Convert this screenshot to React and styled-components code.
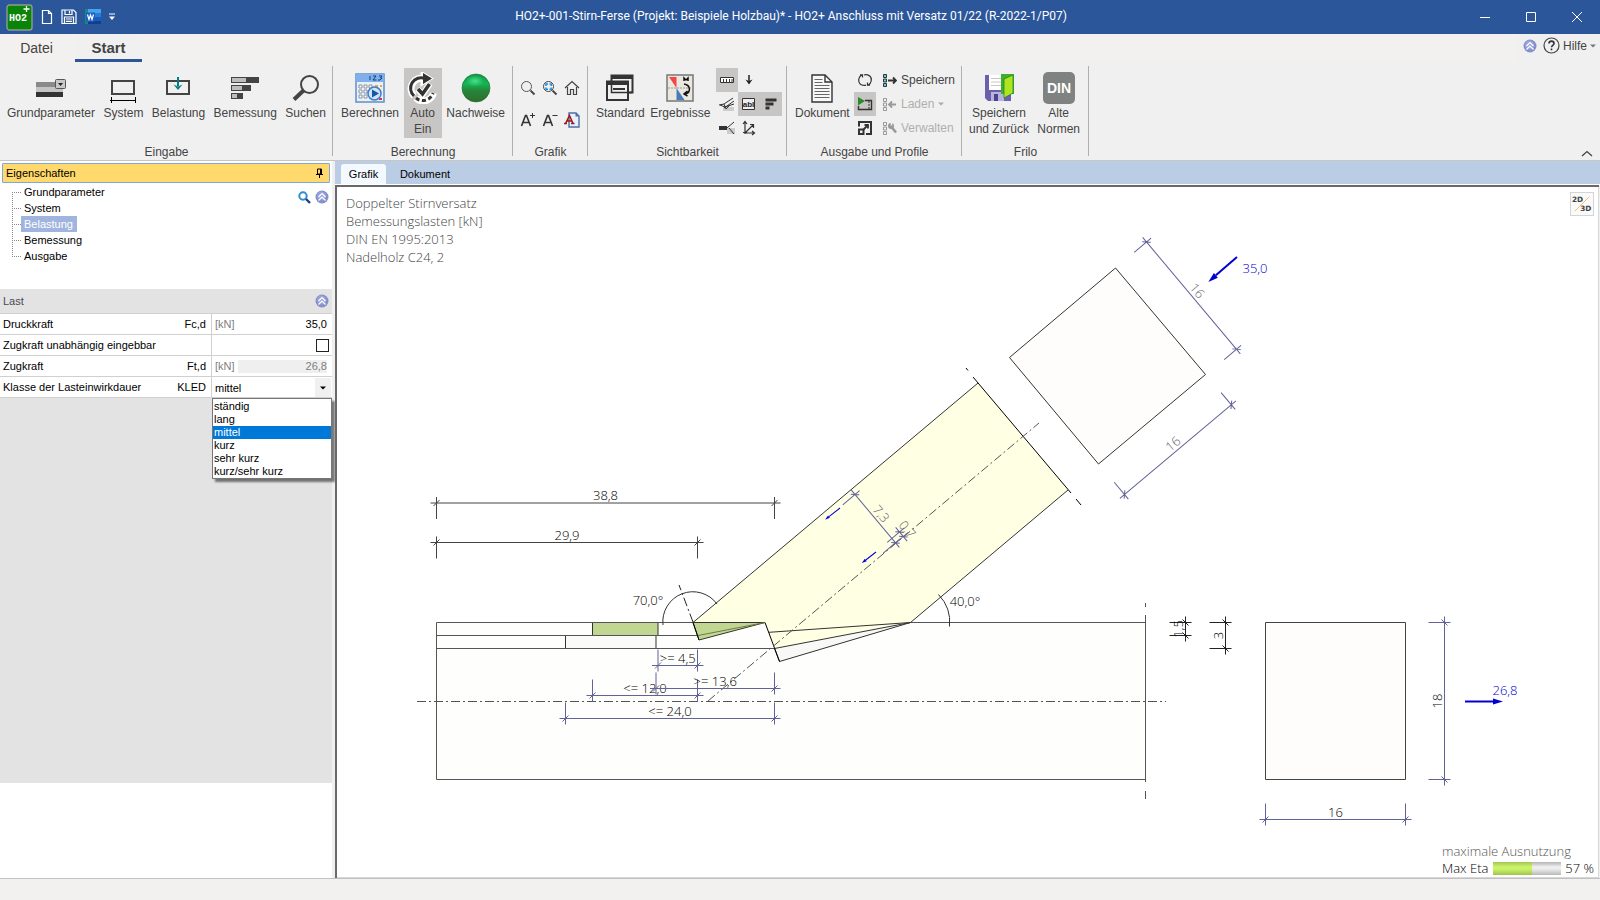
import React from "react";
import styled, { createGlobalStyle, css } from "styled-components";

const GlobalStyle = createGlobalStyle`
  * { box-sizing: border-box; }
  body { margin: 0; font-family: "Liberation Sans", Arial, sans-serif; font-size: 12px; color: #444; background: #fff; }
  button, input, select { font: inherit; color: inherit; margin: 0; }
`;

const drawingFont = `"Open Sans", "Noto Sans", sans-serif`;

/* ---------- window frame ---------- */

const Window = styled.div`
  display: flex;
  flex-direction: column;
  min-height: 100vh;
`;

const TitleBar = styled.header`
  display: flex;
  align-items: center;
  height: 34px;
  background: #2b579a;
  color: #fff;
`;

const QuickAccess = styled.div`
  display: flex;
  align-items: center;
  gap: 8px;
  width: 120px;
  padding-left: 6px;
`;

const Caption = styled.h1`
  flex: 1;
  margin: 0;
  padding-bottom: 2px;
  text-align: center;
  font: 400 12px/16px Roboto, "Open Sans", sans-serif;
  white-space: nowrap;
`;

const BareButton = styled.button`
  display: flex;
  align-items: center;
  justify-content: center;
  padding: 0;
  border: 0;
  background: none;
`;

const WindowButton = styled(BareButton)`
  width: 46px;
  height: 34px;
`;

/* ---------- ribbon ---------- */

const TabRow = styled.nav`
  display: flex;
  height: 28px;
  background: #f3f1ef;
`;

const RibbonTab = styled.button`
  width: ${(p) => (p.$active ? 67 : 75)}px;
  padding: 2px ${(p) => (p.$active ? 0 : 2)}px 0 0;
  border: 0;
  border-bottom: 3px solid ${(p) => (p.$active ? "#2b579a" : "transparent")};
  background: ${(p) => (p.$active ? "#f0f0f0" : "none")};
  font-size: ${(p) => (p.$active ? 15 : 14)}px;
  font-weight: ${(p) => (p.$active ? 700 : 400)};
`;

const HelpArea = styled.div`
  display: flex;
  align-items: center;
  gap: 6px;
  margin-left: auto;
  padding: 0 4px 5px 6px;
  background: #f0f0f0;
`;

const HelpButton = styled(BareButton)`
  gap: 3px;
`;

const Ribbon = styled.div`
  display: flex;
  height: 99px;
  padding-top: 4px;
  background: #f0f0f0;
  border-bottom: 1px solid #c8c6c4;
`;

const Group = styled.section`
  display: flex;
  flex-direction: column;
  flex: none;
  width: ${(p) => p.$width}px;
  height: 94px;
  background: linear-gradient(#b1afad, #b1afad) right top / 1px 90px no-repeat;
`;

const GroupBody = styled.div`
  display: flex;
  flex: 1;
  justify-content: space-between;
  align-items: flex-start;
  padding: 2px ${(p) => p.$right}px 0 ${(p) => p.$left}px;
`;

const GroupTitle = styled.h2`
  margin: 0;
  text-align: center;
  font-size: 12px;
  line-height: 16px;
  font-weight: 400;
`;

const LargeButton = styled.button`
  display: flex;
  flex-direction: column;
  align-items: center;
  gap: 1px;
  height: 70px;
  padding: 4px 0 0;
  border: 0;
  background: none;
  font-size: 12px;
  line-height: 16px;
  white-space: pre-line;
  ${(p) =>
    p.$pressed &&
    css`
      width: 38px;
      padding: 4px 3px 0;
      background: #c8c6c4;
    `}
`;

const IconGrid = styled.div`
  display: grid;
  grid-template-columns: repeat(${(p) => p.$cols ?? 3}, 22px);
  grid-auto-rows: ${(p) => p.$row}px;
  padding-top: ${(p) => p.$top ?? 0}px;
`;

const SmallButton = styled(BareButton)`
  background: ${(p) => (p.$pressed ? "#c8c6c4" : "none")};
`;

const Column = styled.div`
  display: flex;
  flex-direction: column;
`;

const ActionButton = styled.button`
  display: flex;
  align-items: center;
  gap: 4px;
  height: 24px;
  padding: 0 0 0 2px;
  border: 0;
  background: none;
  color: ${(p) => (p.disabled ? "#b1afad" : "#444")};
`;

const CollapseButton = styled(BareButton)`
  align-self: flex-end;
  margin-left: auto;
  width: 26px;
  height: 14px;
`;

/* ---------- property panel ---------- */

const Body = styled.div`
  display: grid;
  flex: 1;
  grid-template-columns: 332px minmax(0, 1fr);
  column-gap: 3px;
  background: #f0f0f0;
`;

const Panel = styled.aside`
  display: flex;
  flex-direction: column;
  background: #fff;
  color: #000;
  font-size: 11px;
`;

const PanelHeader = styled.div`
  display: flex;
  align-items: center;
  justify-content: space-between;
  height: 20px;
  margin: 2px 2px 0;
  padding: 0 5px 0 3px;
  border: 1px solid #7da7e0;
  border-radius: 1px;
  background: #ffd96b;
`;

const TreeArea = styled.div`
  display: flex;
  justify-content: space-between;
  align-items: flex-start;
  height: 106px;
  padding: 1px 3px 0 12px;
`;

const Tree = styled.ul`
  list-style: none;
  margin: 0;
  padding: 0;
`;

const TreeItem = styled.li`
  display: flex;
  align-items: center;
  height: 16px;
  background:
    repeating-linear-gradient(to bottom, #888 0 1px, transparent 1px 2px) 0 ${(p) => (p.$edge === "first" ? "8px" : "0")} / 1px ${(p) => (p.$edge === "last" ? "8px" : "100%")} no-repeat,
    repeating-linear-gradient(to right, #888 0 1px, transparent 1px 2px) 0 8px / 9px 1px no-repeat;
  padding-left: 9px;
`;

const TreeLink = styled.a`
  height: 16px;
  padding: 0 ${(p) => (p.$selected ? 4 : 2)}px 0 3px;
  line-height: 16px;
  text-decoration: none;
  color: ${(p) => (p.$selected ? "#fff" : "#000")};
  background: ${(p) => (p.$selected ? "#9fb4de" : "none")};
`;

const TreeTools = styled.div`
  display: flex;
  gap: 4px;
  padding-top: 6px;
`;

const SectionHeader = styled.div`
  display: flex;
  align-items: center;
  justify-content: space-between;
  height: 25px;
  padding: 0 3px;
  background: #e3e3e3;
  border-bottom: 1px solid #d0d0d0;
  color: #4a4a5a;
`;

const PropRow = styled.div`
  display: grid;
  grid-template-columns: 211px minmax(0, 1fr);
  height: 21px;
  background: #fff;
  border-bottom: 1px solid #d0d0d0;
`;

const PropLabel = styled.label`
  display: flex;
  align-items: center;
  justify-content: space-between;
  padding: 0 5px 0 3px;
`;

const PropValue = styled.div`
  display: flex;
  align-items: center;
  justify-content: flex-end;
  border-left: 1px solid #d0d0d0;
  padding: 0 ${(p) => p.$pad}px 0 3px;
`;

const Unit = styled.span`
  color: #808080;
`;

const NumberInput = styled.input`
  flex: 1;
  width: 0;
  min-width: 0;
  height: 13px;
  margin-left: 3px;
  padding: 0;
  border: 0;
  text-align: right;
  background: #fff;
  &:disabled { background: #efefef; color: #808080; }
`;

const CheckBox = styled.input`
  appearance: none;
  width: 13px;
  height: 13px;
  border: 1px solid #222;
  background: #fff;
`;

const SelectShell = styled.div`
  position: relative;
  display: flex;
  flex: 1;
  height: 20px;
`;

const Select = styled.select`
  appearance: none;
  flex: 1;
  padding: 2px 0 0;
  border: 0;
  outline: 0;
  background: none;
`;

const SelectArrow = styled.span`
  display: flex;
  align-items: center;
  justify-content: center;
  width: 16px;
  margin-top: 1px;
  background: #f0f0f0;
`;

const OptionList = styled.ul`
  position: absolute;
  top: 21px;
  left: -3px;
  width: 120px;
  margin: 0;
  padding: 1px 0 0;
  list-style: none;
  border: 1px solid #777;
  background: #fff;
  box-shadow: 3px 3px 2px rgba(0, 0, 0, 0.5);
`;

const Option = styled.li`
  height: 13px;
  padding-left: 1px;
  line-height: 13px;
  ${(p) =>
    p.$selected &&
    css`
      background: #0078d7;
      color: #fff;
    `}
`;

const PanelFill = styled.div`
  flex: 1;
  margin-bottom: 95px;
  background: #e3e3e3;
`;

/* ---------- drawing view ---------- */

const View = styled.main`
  display: flex;
  flex-direction: column;
`;

const ViewTabs = styled.div`
  display: flex;
  height: 24px;
  padding: 3px 0 0 6px;
  background: #bbcde5;
  border-bottom: 1px solid #fff;
`;

const ViewTab = styled.button`
  width: ${(p) => (p.$active ? 45 : 78)}px;
  padding: 0;
  border: 0;
  border-radius: 3px 3px 0 0;
  background: ${(p) => (p.$active ? "#f4f9ff" : "none")};
  color: #000;
  font-size: 11px;
`;

const Canvas = styled.div`
  position: relative;
  flex: 1;
  margin-right: 1px;
  border: solid #696969;
  border-width: 2px 0 0 2px;
  box-shadow: inset -1px -1px #d8d8d8;
  background: #fff;
`;

const CanvasInfo = styled.div`
  position: absolute;
  top: 7px;
  left: 9px;
  color: #444;
  font: 300 13px/18px ${drawingFont};
  white-space: pre-line;
`;

const ModeButton = styled(BareButton)`
  position: absolute;
  top: 5px;
  right: 5px;
  width: 24px;
  height: 24px;
  border: 1px solid #d4d4d4;
  background: #fafafa;
`;

const Utilisation = styled.div`
  position: absolute;
  right: 5px;
  bottom: 1px;
  width: 152px;
  color: #000;
  font: 300 13px/17px ${drawingFont};
`;

const UtilTitle = styled.div`
  color: #555;
  white-space: nowrap;
`;

const UtilRow = styled.div`
  display: flex;
  align-items: center;
  justify-content: space-between;
  white-space: nowrap;
`;

const Meter = styled.div`
  width: 68px;
  height: 13px;
  background: linear-gradient(#b4b4b4, #f2f2f2 40%, #e6e6e6 60%, #b8b8b8);
`;

const MeterFill = styled.div`
  height: 100%;
  background: linear-gradient(#a3c653, #cdf56c 40%, #c5ee62 60%, #a0c252);
`;

const Plot = styled.svg`
  display: block;
  width: 100%;
  height: auto;
  fill: none;
  stroke: #333;
  text {
    stroke: none;
    fill: #000;
    font: 300 13px ${drawingFont};
    text-anchor: middle;
  }
`;

const StatusBar = styled.footer`
  height: 22px;
  background: #f3f1ef;
  border-top: 1px solid #c0c0c0;
`;

/* ---------- icons ---------- */

const Svg = ({ w = 32, h = w, children, ...rest }) => (
  <svg width={w} height={h} viewBox={`0 0 ${w} ${h}`} fill="none" aria-hidden="true" {...rest}>
    {children}
  </svg>
);

const LogoIcon = () => (
  <Svg w={27}>
    <rect x="1" y="1" width="25" height="25" rx="2.5" fill="#088408" stroke="#8f9c8f" strokeWidth="1.4" />
    <text x="12" y="17" fontSize="10" fontWeight="700" fill="#fff" textAnchor="middle" fontFamily="Liberation Mono">HO2</text>
    <path d="M20.500 2v6M17.500 5h6" stroke="#fff" strokeWidth="1.300" />
  </Svg>
);
const NewIcon = () => (
  <Svg w={12} h={16}><path d="M1.500 1.500h6l3 3v10h-9zM7.500 1.500v3h3" stroke="#fff" strokeWidth="1.200" /></Svg>
);
const SaveIcon = () => (
  <Svg w={16}>
    <path d="M1 1h11.500l2.500 2.500v11H1zM4 1v4.500h7V1M8.500 2v2.500M3.500 14.500V8h9v6.500M5 10h6M5 12.300h6" stroke="#fff" strokeWidth="1.200" />
  </Svg>
);
const WordIcon = () => (
  <Svg w={16}>
    <path d="M3 0h13v4H3z" fill="#41a5ee" /><path d="M3 4h13v4H3z" fill="#2b7cd3" /><path d="M3 8h13v4H3z" fill="#185abd" />
    <path d="M3 12h13v3H3z" fill="#103f91" /><path d="M0 0h3v15H0z" fill="#128b7d" /><path d="M1 3.500h9v9H1z" fill="#1c5fc0" />
    <path d="M2.500 5.500 4 10.500l1.500-4.500L7 10.500l1.500-5" stroke="#fff" strokeWidth="1.200" />
  </Svg>
);
const MoreIcon = () => (
  <Svg w={6} h={8}><path d="M0 1h6" stroke="#fff" /><path d="M0 3.500h6L3 7z" fill="#fff" /></Svg>
);
const MinIcon = () => <Svg w={10}><path d="M0 5.500h10" stroke="#fff" /></Svg>;
const MaxIcon = () => <Svg w={10}><path d="M.5.500h9v9h-9z" stroke="#fff" /></Svg>;
const CloseIcon = () => <Svg w={10}><path d="m0 0 10 10M10 0 0 10" stroke="#fff" /></Svg>;

const UpBadge = () => (
  <Svg w={14}>
    <circle cx="7" cy="7" r="6.500" fill="#8390cc" /><circle cx="6.500" cy="6" r="4.500" fill="#9aa3da" />
    <path d="m3.500 7 3.500-3.500L10.500 7M3.500 10.500 7 7l3.500 3.500" stroke="#fff" strokeWidth="1.200" />
  </Svg>
);
const HelpIcon = () => (
  <Svg w={17}>
    <circle cx="8.500" cy="8.500" r="7.500" stroke="#444" strokeWidth="1.200" />
    <path d="M6 6.500c0-3.200 5-3.200 5 0 0 1.800-2.500 1.800-2.500 3.700M8.500 11.500v1.700" stroke="#333" strokeWidth="1.600" />
  </Svg>
);
const CaretIcon = ({ color = "#777" }) => <Svg w={6} h={4}><path d="M0 .5h6L3 3.500z" fill={color} /></Svg>;
const ChevronUp = () => <Svg w={12} h={7}><path d="m1 6 5-4.500L11 6" stroke="#444" strokeWidth="1.300" /></Svg>;

const ParameterIcon = () => (
  <Svg>
    <path d="M1 10h19v5H1z" fill="#8a8a8a" /><path d="M1 15h27v5H1z" fill="#c4c4c4" /><path d="M1 20h27v5H1z" fill="#333" />
    <rect x="20.500" y="7.500" width="10" height="9" rx="1" fill="#c8c8c8" stroke="#555" /><path d="M23 11h5l-2.500 3z" fill="#222" />
  </Svg>
);
const SystemIcon = () => (
  <Svg>
    <path d="M5 9h22v13H5z" stroke="#444" strokeWidth="2" /><path d="M3 28.500h26M4.500 25v6M28.500 25v6" stroke="#000" />
  </Svg>
);
const LoadIcon = () => (
  <Svg>
    <path d="M5 9h22v13H5z" stroke="#444" strokeWidth="2" /><path d="M16 5v9" stroke="#008080" strokeWidth="2" />
    <path d="m11.500 12.500 4.500 2 4.500-2L16 18z" fill="#008080" />
  </Svg>
);
const DesignIcon = () => (
  <Svg>
    <path d="M2 5h28v6H2zM2 13h20v6H2zM2 21h12v6H2z" fill="#444" />
    <path d="M3 6h14v4H3zM3 14h10v4H3zM3 22h5v4H3z" fill="#bdbdbd" />
  </Svg>
);
const SearchIcon = () => (
  <Svg><circle cx="19.500" cy="12.500" r="8.500" stroke="#444" strokeWidth="2" /><path d="m13.500 18.500-9.500 9" stroke="#444" strokeWidth="4" /></Svg>
);
const CalcIcon = () => (
  <Svg>
    <path d="M2 2h28v28H2z" fill="#e8f0fa" stroke="#5f8fcc" strokeWidth="1.500" /><path d="M2 2h28v8H2z" fill="#7fb0ec" />
    <path d="M16 4v4M19 4h3l-3 4h3.500M25 4h3l-1.500 2H28l-2 2h-2" stroke="#123f7d" />
    <path d="M5 13h3v3H5zM10 13h3v3h-3zM15 13h3v3h-3zM5 18h3v3H5zM10 18h3v3h-3zM5 23h3v3H5zM10 23h3v3h-3z" fill="#fff" stroke="#8a93a0" />
    <path d="M21 13h3v2h-3zM26 13h2v2h-2z" fill="#f4a340" /><path d="M25 26h3v2h-3z" fill="#d33" />
    <circle cx="20.500" cy="21.500" r="6.500" fill="#cfe4fa" stroke="#3f7fc4" strokeWidth="1.500" /><path d="m18 17.500 7 4-7 4z" fill="#17579f" />
  </Svg>
);
const AutoIcon = () => (
  <Svg>
    <path d="M17 6.500A10.500 10.500 0 0 0 7 24M9 26a10.500 10.500 0 0 0 17.500-5" stroke="#fff" strokeWidth="7" />
    <path d="M15 1l9 5.500-9 5.500z" fill="#fff" stroke="#fff" strokeWidth="3" />
    <path d="M18 6.500A10.500 10.500 0 0 0 7 24" stroke="#333" strokeWidth="3" />
    <path d="M9 26a10.500 10.500 0 0 0 17-5" stroke="#333" strokeWidth="3" strokeDasharray="4 2.500" />
    <path d="M16 1l9 5.500-9 5.500z" fill="#333" /><path d="m10.500 17 5 5.500 7.500-11" stroke="#fff" strokeWidth="6" />
    <path d="m11 17 4.500 5 7-10" stroke="#333" strokeWidth="3.500" />
  </Svg>
);
const BallIcon = () => (
  <Svg>
    <defs>
      <linearGradient id="ball" x1="0" y1="0" x2="0" y2="1">
        <stop offset="0" stopColor="#0b9d4a" /><stop offset=".35" stopColor="#15b552" /><stop offset=".6" stopColor="#27853a" /><stop offset="1" stopColor="#2f6d2c" />
      </linearGradient>
      <radialGradient id="shine"><stop offset="0" stopColor="#4be08a" /><stop offset="1" stopColor="#4be08a" stopOpacity="0" /></radialGradient>
    </defs>
    <circle cx="16" cy="16" r="14" fill="url(#ball)" stroke="#1d6a30" strokeWidth=".6" /><ellipse cx="15" cy="9" rx="9" ry="5.500" fill="url(#shine)" />
  </Svg>
);
const ZoomIcon = ({ fit }) => (
  <Svg w={16}>
    <circle cx="6.500" cy="6.500" r="5" stroke={fit ? "#444" : "#555"} /><path d="m10.500 10.500 4 4" stroke="#444" strokeWidth="1.800" />
    {fit && <path d="M4 6V4h2M7.500 4h1.700v2M9.200 7.500v1.700H7.500M6 9.200H4V7.500" stroke="#1f8fdc" strokeWidth="1.500" />}
  </Svg>
);
const HomeIcon = () => (
  <Svg w={16}><path d="m1 8 7-6.500L15 8M3.500 7v7.500h3V9.500h3v5h3V7" stroke="#444" strokeWidth="1.200" /></Svg>
);
const FontIcon = ({ minus }) => (
  <Svg w={16}>
    <path d="m1.500 14 4-10.500h1L10.500 14M3 10.500h6" stroke="#333" strokeWidth="1.600" /><path d={minus ? "M10.500 3.500h5" : "M10 3.500h5M12.500 1v5"} stroke="#333" />
  </Svg>
);
const FontPageIcon = () => (
  <Svg w={16}>
    <path d="M5 1h7l3 3v11H5z" fill="#e8f0fb" stroke="#4c6ea8" strokeWidth="1.400" /><path d="M11.500 1v3.500H15z" fill="#4c6ea8" />
    <path d="m1.500 11.500 4-8 3.500 8M3 9h5.500M0 11.500h3M7 11.500h3.500" stroke="#a01515" strokeWidth="1.500" />
  </Svg>
);
const WindowsIcon = () => (
  <Svg>
    <path d="M7.500 3.500h21v17h-21z" fill="#f0f0f0" stroke="#333" strokeWidth="2" /><path d="M7 3h22v4H7z" fill="#333" />
    <path d="M3 9.500h21V28H3z" fill="#f0f0f0" stroke="#333" strokeWidth="2" /><path d="M2.500 9h22v4h-22z" fill="#333" />
    <path d="M7.500 10v10.500H28" stroke="#333" strokeWidth="1.500" /><path d="M9 17h12" stroke="#333" strokeWidth="2" />
  </Svg>
);
const ResultIcon = () => (
  <Svg>
    <path d="M3 3h26v26H3z" fill="#e9e7de" stroke="#777" strokeWidth="1.500" /><path d="M5 5h7.500v11z" fill="#f74444" />
    <path d="M12.500 16v12h8z" fill="#4a79bd" /><path d="M4 16h24" stroke="#999" strokeDasharray="2 1" />
    <path d="M20 9V6l2 2 2-2v3M20 12c7 1 7 9 1 10M23.500 19l-3.500 3 3.500 2" stroke="#111" strokeWidth="1.500" />
  </Svg>
);
const DocumentIcon = () => (
  <Svg>
    <path d="M6 3h13l7 7v20H6z" fill="#f8f8f8" stroke="#333" strokeWidth="1.400" /><path d="M19 3v7h7" stroke="#333" strokeWidth="1.400" />
    <path d="M8.500 7.500h8M8.500 10.500h8M8.500 13.500h15M8.500 16.500h15M8.500 19.500h15M8.500 22.500h15M8.500 25.500h15" stroke="#666" strokeWidth="1.200" />
  </Svg>
);
const SaveBackIcon = () => (
  <Svg>
    <path d="M2 3h26v26H5l-3-3z" fill="#6b5fae" /><path d="M6 3h15v15H6z" fill="#fff" /><path d="M8 6.500h12M8 10h12M8 13.500h12" stroke="#c8c8c8" />
    <path d="M8 20h13v9H8z" fill="#b8b3dc" /><path d="M11 22h4v7h-4z" fill="#4b418c" />
    <path d="M18 2h13v20h-13z" fill="#3eae2c" /><path d="m21 7 9-4v18l-9 5z" fill="#aee422" stroke="#27842a" strokeWidth=".8" />
  </Svg>
);
const DinIcon = () => (
  <Svg>
    <rect width="32" height="32" rx="5" fill="#808282" />
    <text x="16" y="21" fontSize="14" fontWeight="700" fill="#fff" textAnchor="middle" fontFamily="Liberation Sans">DIN</text>
  </Svg>
);
const RulerIcon = () => <Svg w={16}><path d="M1.500 5.500h13v5h-13z" fill="#fff" stroke="#333" /><path d="M4.500 7v3M7.500 7v3M10.500 7v3M13 7v3" stroke="#333" /></Svg>;
const DownIcon = () => <Svg w={16}><path d="M8 3v6" stroke="#222" strokeWidth="1.500" /><path d="M4.500 7.500 8 9l3.500-1.500L8 12.500z" fill="#222" /></Svg>;
const SupportIcon = () => (
  <Svg w={16}><path d="M4 11h11v4H4z" fill="#ccc" /><path d="m0 9 5-1 9-6M5 12l10-7M1 9l5 2 9-3M5 8l2 5 4-4" stroke="#333" /></Svg>
);
const LabelIcon = () => (
  <Svg w={16}>
    <path d="M1.500 2.500h12v11h-12z" fill="#eee" stroke="#333" />
    <text x="7.500" y="11" fontSize="8" fontWeight="700" fill="#222" textAnchor="middle" fontFamily="Liberation Sans">abl</text>
  </Svg>
);
const BarsIcon = () => <Svg w={16}><path d="M2.500 2.500h11v3h-11zM2.500 6.500h8v3h-8zM2.500 10.500h4v3h-4z" fill="#333" /></Svg>;
const ForkIcon = () => (
  <Svg w={16}><path d="M8 8h8v6H8z" fill="#ccc" /><path d="M0 6h8v4H0z" fill="#333" /><path d="m8 8 7-6M10 8l5 6" stroke="#333" /></Svg>
);
const AxesIcon = () => (
  <Svg w={16}><path d="M4 14V2M2 4l2-2.500L6 4M4 13h9M11 11l2.500 2-2.500 2M4 13l8-8M9 4.500h3.500V8M2 12.500h4" stroke="#333" strokeWidth="1.200" /></Svg>
);
const RefreshIcon = () => (
  <Svg w={16}><path d="M5 2.800a6 6 0 0 0-1.500 9.700M11 13.200a6 6 0 0 0 1.500-9.700M5.500 13l-2-.5M3 2.800h2.500V5.500M7 3a6 6 0 0 1 5.500 1M9 13.200a6 6 0 0 1-5-.8M13 13.200h-2.500v-2.700" stroke="#333" strokeWidth="1.200" /></Svg>
);
const PreviewIcon = () => (
  <Svg w={16}><path d="M8 4.500h6.500v9h-13V10" stroke="#333" strokeWidth="1.400" /><path d="M12 5v8" stroke="#333" strokeDasharray="2 1" /><path d="m1 1 7 4-7 4.500z" fill="#2b8a2b" /></Svg>
);
const ExpandIcon = () => (
  <Svg w={16}>
    <path d="M5 2h9v12H9M2 6.500V2h3M2 9.500h4.500V14H2z" stroke="#333" strokeWidth="2" />
    <path d="M6.500 9.500 11 5M7.500 5H11v3.500" stroke="#333" strokeWidth="1.800" />
  </Svg>
);
const ProfileIcon = ({ kind, color = "#333" }) => (
  <Svg w={15}>
    <path d="M1.500 1.500h3v3h-3zM1.500 6h3v3h-3zM1.500 10.500h3v3h-3z" fill={kind === "save" ? "#5fd0f0" : "none"} stroke={color} />
    {kind === "save" && <path d="M6 7.500h8M11 4.500l3 3-3 3" stroke={color} strokeWidth="1.800" />}
    {kind === "load" && <path d="M14 7.500H7M10 4.500l-3 3 3 3" stroke={color} strokeWidth="1.800" />}
    {kind === "manage" && <><circle cx="9" cy="5" r="3" fill={color} /><path d="m9.500 6 4.500 5.500" stroke={color} strokeWidth="2.600" /><path d="M9.500 1v3.500" stroke="#f0f0f0" strokeWidth="1.500" /></>}
  </Svg>
);
const PinIcon = () => <Svg w={9} h={10}><path d="M2.500 1h4v5h-4zM1 6.500h7M4.500 7v3M5.500 1v5" stroke="#000" /></Svg>;
const LensIcon = () => (
  <Svg w={13}><circle cx="5" cy="5" r="3.700" stroke="#2f8fd0" strokeWidth="2" /><path d="m8 8 4 4" stroke="#1e3f86" strokeWidth="2.400" /></Svg>
);
const ModeIcon = () => (
  <Svg w={24}>
    <path d="M20 4 4 20" stroke="#f4b95a" />
    <g fontSize="8" fontWeight="700" fill="#444" fontFamily="DejaVu Sans"><text x="1" y="10">2D</text><text x="10" y="20">3D</text></g>
  </Svg>
);

/* ---------- drawing ---------- */

const VIOLET = "#62629a";
const BLUE = "#0000d0";

/* Dimension line of a given length, drawn in a local frame turned by `angle`. */
function Dimension({ x, y, length, angle = 0, from = -16, to = 6, color = VIOLET, label, labelColor = "#000" }) {
  return (
    <g transform={`translate(${x} ${y}) rotate(${angle})`} stroke={color}>
      <path d={`M-6 0H${length + 6}M0 ${from}V${to}M${length} ${from}V${to}M-3 3L3 -3M${length - 3} 3L${length + 3} -3`} />
      <text x={length / 2} y="-3" style={{ fill: labelColor }}>{label}</text>
    </g>
  );
}

function Arrow({ x, y, length, angle, head = 10, width = 2 }) {
  return (
    <g transform={`translate(${x} ${y}) rotate(${angle})`}>
      <path d={`M0 0H${length - head}`} stroke={BLUE} strokeWidth={width} />
      <path d={`M${length - head} ${-head * 0.3}L${length} 0L${length - head} ${head * 0.3}Z`} fill={BLUE} stroke="none" />
    </g>
  );
}

function Drawing() {
  return (
    <Plot viewBox="337 187 1262 689" role="img" aria-label="Doppelter Stirnversatz">
      {/* horizontal chord */}
      <path d="M436.500 622.500H765L779.500 661.500L910 622.500H1145.500V779.500H436.500Z" fill="#fefefc" stroke="none" />
      <path d="M592.500 622.500h65.500v13h-65.500z" fill="#c1d791" />
      <path d="M565.500 635.500h90.500v13h-90.500z" fill="#fafaf8" />
      <path d="M765 622.500H436.500V779.500H1145.500M910 622.500H1145.500M436.500 635.500H698M436.500 648.500H774" stroke="#555" />

      {/* inclined strut */}
      <path d="M693 622.500L978 383L1068 490L910.500 622.500L774.500 648.500L765 622.500Z" fill="#ffffe4" stroke="none" />
      <path d="M774.500 648.500L910.500 622.500L779.500 661.500Z" fill="#f8f9f7" />
      <path d="M693 622.500H765L699 640Z" fill="#c1d791" />
      <path d="M698 635.500L765 622.500" stroke="#6b7d45" />
      <path d="M693 622.500L978 383M1068 490L910.500 622.500L769 632.300" />
      <path d="M693 622.500L699 640M765 622.500L779.500 661.500" stroke="#000" />
      <path d="M966 368l2 2.500M973 377L1071 493M1076 499l5 6" stroke="#000" />
      <path d="M1145.500 603v4M1145.500 615V782M1145.500 791v8" stroke="#555" />

      {/* centre lines */}
      <path d="M417 701.500H1166M708 701L1039 423" stroke="#555" strokeDasharray="9 3 2 3" />
      <path d="M693 622L679 585" stroke="#222" strokeDasharray="9 3 2 3" />

      {/* angles */}
      <path d="M663 625A30 30 0 0 1 717 604" />
      <text x="648" y="605">70,0°</text>
      <path d="M949.500 626.500A40 40 0 0 0 938.500 594.500" />
      <text x="965" y="606">40,0°</text>

      {/* lengths along the chord */}
      <Dimension x={436.5} y={503} length={338} from={-6} to={16} color="#444" label="38,8" />
      <Dimension x={436.5} y={542.5} length={261} from={-6} to={16} color="#444" label="29,9" />
      <Dimension x={658} y={665.5} length={39.5} label=">= 4,5" />
      <Dimension x={592.5} y={695.5} length={105} label="<= 12,0" />
      <Dimension x={656} y={688.5} length={118.5} label=">= 13,6" />
      <Dimension x={565.5} y={718.5} length={209} label="<= 24,0" />

      {/* notch depths */}
      <Dimension x={1185.5} y={635.5} length={13} angle={-90} color="#222" label="1,5" />
      <Dimension x={1225.5} y={648.5} length={26} angle={-90} color="#222" label="3" />

      {/* eccentricities */}
      <Dimension x={855} y={494.5} length={63} angle={50} from={-6} to={16} label="7,3" labelColor="#666" />
      <Dimension x={899.5} y={532} length={6} angle={50} from={-6} to={16} label="0,7" labelColor="#666" />
      <Arrow x={840} y={508} length={19} angle={142} head={5} width={1} />
      <Arrow x={876} y={552} length={18} angle={142} head={5} width={1} />

      {/* strut section */}
      <path d="M1115.500 268L1205.500 374.500L1098.500 464L1009.500 357.500Z" fill="#fefdfc" />
      <Dimension x={1146.5} y={242} length={140} angle={50} from={-6} to={16} label="16" labelColor="#666" />
      <Dimension x={1124.5} y={494.5} length={139.5} angle={-40} label="16" labelColor="#666" />
      <Arrow x={1237} y={257} length={38} angle={139} />
      <text x="1255" y="273" style={{ fill: BLUE }}>35,0</text>

      {/* chord section */}
      <path d="M1265.500 622.500h140v157h-140z" fill="#fefdfc" stroke="#444" />
      <Dimension x={1444.5} y={779.5} length={157} angle={-90} label="18" />
      <Dimension x={1265.5} y={819.5} length={140} label="16" />
      <Arrow x={1465} y={701.5} length={38} angle={0} />
      <text x="1505" y="695" style={{ fill: BLUE }}>26,8</text>
    </Plot>
  );
}

/* ---------- data ---------- */

const treeItems = ["Grundparameter", "System", "Belastung", "Bemessung", "Ausgabe"];
const durations = ["ständig", "lang", "mittel", "kurz", "sehr kurz", "kurz/sehr kurz"];

const Large = ({ icon, children, pressed }) => (
  <LargeButton type="button" $pressed={pressed}>{icon}<span>{children}</span></LargeButton>
);
const Small = ({ icon, label, pressed }) => (
  <SmallButton type="button" aria-label={label} $pressed={pressed}>{icon}</SmallButton>
);

function RibbonGroup({ title, width, left = 7, right = 7, children }) {
  return (
    <Group $width={width}>
      <GroupBody $left={left} $right={right}>{children}</GroupBody>
      <GroupTitle>{title}</GroupTitle>
    </Group>
  );
}

export default function App() {
  return (
    <Window>
      <GlobalStyle />
      <TitleBar>
        <QuickAccess>
          <LogoIcon />
          <BareButton type="button" aria-label="Neu"><NewIcon /></BareButton>
          <BareButton type="button" aria-label="Speichern"><SaveIcon /></BareButton>
          <BareButton type="button" aria-label="Word"><WordIcon /></BareButton>
          <BareButton type="button" aria-label="Anpassen"><MoreIcon /></BareButton>
        </QuickAccess>
        <Caption>HO2+-001-Stirn-Ferse (Projekt: Beispiele Holzbau)* - HO2+ Anschluss mit Versatz 01/22 (R-2022-1/P07)</Caption>
        <WindowButton type="button" aria-label="Minimieren"><MinIcon /></WindowButton>
        <WindowButton type="button" aria-label="Maximieren"><MaxIcon /></WindowButton>
        <WindowButton type="button" aria-label="Schließen"><CloseIcon /></WindowButton>
      </TitleBar>

      <TabRow>
        <RibbonTab type="button">Datei</RibbonTab>
        <RibbonTab type="button" $active>Start</RibbonTab>
        <HelpArea>
          <BareButton type="button" aria-label="Einklappen"><UpBadge /></BareButton>
          <HelpButton type="button"><HelpIcon />Hilfe<CaretIcon /></HelpButton>
        </HelpArea>
      </TabRow>

      <Ribbon>
        <RibbonGroup title="Eingabe" width={333}>
          <Large icon={<ParameterIcon />}>Grundparameter</Large>
          <Large icon={<SystemIcon />}>System</Large>
          <Large icon={<LoadIcon />}>Belastung</Large>
          <Large icon={<DesignIcon />}>Bemessung</Large>
          <Large icon={<SearchIcon />}>Suchen</Large>
        </RibbonGroup>
        <RibbonGroup title="Berechnung" width={180} left={8} right={8}>
          <Large icon={<CalcIcon />}>Berechnen</Large>
          <Large icon={<AutoIcon />} pressed>{"Auto\nEin"}</Large>
          <Large icon={<BallIcon />}>Nachweise</Large>
        </RibbonGroup>
        <RibbonGroup title="Grafik" width={75} left={4} right={4}>
          <IconGrid $row={32} $top={4}>
            <Small label="Zoom" icon={<ZoomIcon />} />
            <Small label="Einpassen" icon={<ZoomIcon fit />} />
            <Small label="Gesamtansicht" icon={<HomeIcon />} />
            <Small label="Schrift größer" icon={<FontIcon />} />
            <Small label="Schrift kleiner" icon={<FontIcon minus />} />
            <Small label="Schriftart" icon={<FontPageIcon />} />
          </IconGrid>
        </RibbonGroup>
        <RibbonGroup title="Sichtbarkeit" width={199} left={8} right={5}>
          <Large icon={<WindowsIcon />}>Standard</Large>
          <Large icon={<ResultIcon />}>Ergebnisse</Large>
          <IconGrid $row={24}>
            <Small pressed label="Bemaßung" icon={<RulerIcon />} />
            <Small label="Lasten" icon={<DownIcon />} />
            <span />
            <Small label="Anschluss" icon={<SupportIcon />} />
            <Small pressed label="Beschriftung" icon={<LabelIcon />} />
            <Small pressed label="Ausnutzung" icon={<BarsIcon />} />
            <Small label="Stäbe" icon={<ForkIcon />} />
            <Small label="Achsen" icon={<AxesIcon />} />
          </IconGrid>
        </RibbonGroup>
        <RibbonGroup title="Ausgabe und Profile" width={175} left={8}>
          <Large icon={<DocumentIcon />}>Dokument</Large>
          <IconGrid $row={24} $cols={1}>
            <Small label="Aktualisieren" icon={<RefreshIcon />} />
            <Small pressed label="Vorschau" icon={<PreviewIcon />} />
            <Small label="Vollbild" icon={<ExpandIcon />} />
          </IconGrid>
          <Column>
            <ActionButton type="button"><ProfileIcon kind="save" />Speichern</ActionButton>
            <ActionButton type="button" disabled><ProfileIcon kind="load" color="#999" />Laden<CaretIcon color="#aaa" /></ActionButton>
            <ActionButton type="button" disabled><ProfileIcon kind="manage" color="#999" />Verwalten</ActionButton>
          </Column>
        </RibbonGroup>
        <RibbonGroup title="Frilo" width={127} right={9}>
          <Large icon={<SaveBackIcon />}>{"Speichern\nund Zurück"}</Large>
          <Large icon={<DinIcon />}>{"Alte\nNormen"}</Large>
        </RibbonGroup>
        <CollapseButton type="button" aria-label="Menüband einklappen"><ChevronUp /></CollapseButton>
      </Ribbon>

      <Body>
        <Panel>
          <PanelHeader>Eigenschaften<PinIcon /></PanelHeader>
          <TreeArea>
            <Tree>
              {treeItems.map((name, i) => (
                <TreeItem key={name} $edge={i === 0 ? "first" : i === treeItems.length - 1 ? "last" : ""}>
                  <TreeLink href="#" $selected={name === "Belastung"}>{name}</TreeLink>
                </TreeItem>
              ))}
            </Tree>
            <TreeTools>
              <BareButton type="button" aria-label="Suchen"><LensIcon /></BareButton>
              <BareButton type="button" aria-label="Alle einklappen"><UpBadge /></BareButton>
            </TreeTools>
          </TreeArea>

          <SectionHeader>Last<UpBadge /></SectionHeader>
          <PropRow>
            <PropLabel htmlFor="fc">Druckkraft<span>Fc,d</span></PropLabel>
            <PropValue $pad={5}><Unit>[kN]</Unit><NumberInput id="fc" defaultValue="35,0" /></PropValue>
          </PropRow>
          <PropRow>
            <PropLabel htmlFor="free">Zugkraft unabhängig eingebbar</PropLabel>
            <PropValue $pad={3}><CheckBox id="free" type="checkbox" /></PropValue>
          </PropRow>
          <PropRow>
            <PropLabel htmlFor="ft">Zugkraft<span>Ft,d</span></PropLabel>
            <PropValue $pad={5}><Unit>[kN]</Unit><NumberInput id="ft" disabled defaultValue="26,8" /></PropValue>
          </PropRow>
          <PropRow>
            <PropLabel htmlFor="kled">Klasse der Lasteinwirkdauer<span>KLED</span></PropLabel>
            <PropValue $pad={1}>
              <SelectShell>
                <Select id="kled" defaultValue="mittel">
                  {durations.map((d) => <option key={d}>{d}</option>)}
                </Select>
                <SelectArrow><CaretIcon color="#000" /></SelectArrow>
                <OptionList role="listbox" aria-label="Klasse der Lasteinwirkdauer">
                  {durations.map((d) => (
                    <Option key={d} role="option" aria-selected={d === "mittel"} $selected={d === "mittel"}>{d}</Option>
                  ))}
                </OptionList>
              </SelectShell>
            </PropValue>
          </PropRow>
          <PanelFill />
        </Panel>

        <View>
          <ViewTabs>
            <ViewTab type="button" $active>Grafik</ViewTab>
            <ViewTab type="button">Dokument</ViewTab>
          </ViewTabs>
          <Canvas>
            <Drawing />
            <CanvasInfo>{"Doppelter Stirnversatz\nBemessungslasten [kN]\nDIN EN 1995:2013\nNadelholz C24, 2"}</CanvasInfo>
            <ModeButton type="button" aria-label="2D/3D"><ModeIcon /></ModeButton>
            <Utilisation>
              <UtilTitle>maximale Ausnutzung</UtilTitle>
              <UtilRow>
                Max Eta
                <Meter><MeterFill style={{ width: "57%" }} /></Meter>
                57 %
              </UtilRow>
            </Utilisation>
          </Canvas>
        </View>
      </Body>
      <StatusBar />
    </Window>
  );
}
